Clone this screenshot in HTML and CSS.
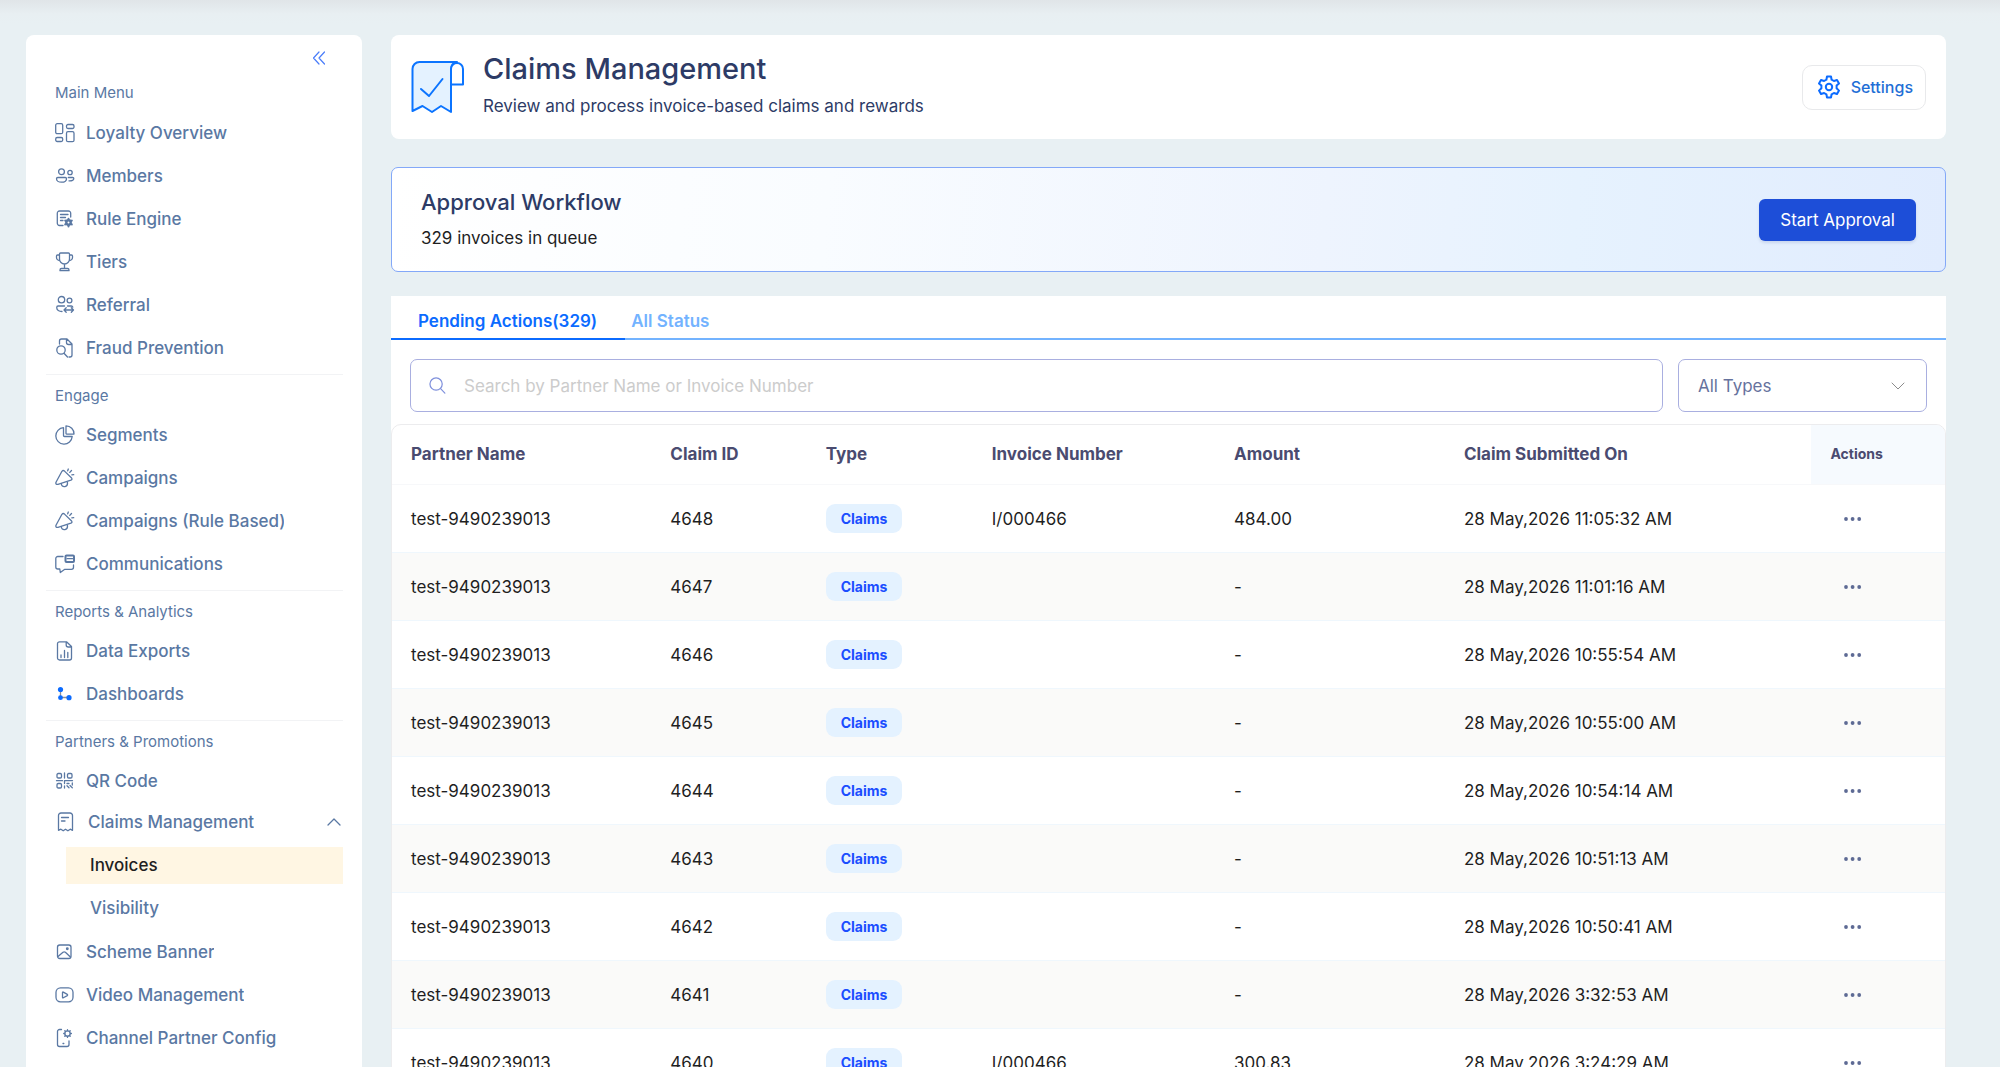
FILE: index.html
```
<!DOCTYPE html>
<html lang="en">
<head>
<meta charset="utf-8">
<meta name="viewport" content="width=device-width, initial-scale=1">
<title>Claims Management</title>
<link rel="stylesheet" href="styles.css">
</head>
<body>
<svg class="sprite" aria-hidden="true">
  <symbol id="i-grid" viewBox="0 0 20 20"><rect x=".7" y=".7" width="7" height="10" rx="1.500"/><rect x="11.500" y="1.500" width="7.500" height="4" rx="1.500"/><rect x=".7" y="14.500" width="7" height="4" rx="1.500"/><rect x="11.500" y="8.700" width="7.500" height="10" rx="1.500"/></symbol>
  <symbol id="i-members" viewBox="0 0 20 20"><circle cx="6.500" cy="5.700" r="2.900"/><circle cx="15" cy="6.500" r="2.200"/><path d="M2.800 11.500h7.500q1.200 0 1.200 1.200c0 2.200-2 3.500-5 3.500s-5-1.300-5-3.500q0-1.200 1.300-1.200zM13.300 11.500h4.500q1 0 1 1c0 1.700-1.900 2.500-4.800 2.300"/></symbol>
  <symbol id="i-rule" viewBox="0 0 20 20"><path d="M8 16.500H4.500a2.200 2.200 0 0 1-2.200-2.200V4.200A2.200 2.200 0 0 1 4.500 2H13.500a2.200 2.200 0 0 1 2.200 2.200V8M5.500 5.500h7.500M5.500 8.500h5M5.500 11.500h2.500"/><circle cx="13.500" cy="13.500" r="2.200" stroke-width="2.400"/><path d="M13.500 9.700v1.200M13.500 16.200v1.200M10.200 11.600l1 .6M15.800 14.800l1 .6M10.200 15.400l1-.6M15.800 12.200l1-.6" stroke-width="2"/></symbol>
  <symbol id="i-cup" viewBox="0 0 20 20"><path d="M4.500 2Q4.500 1 5.500 1H13.500Q14.500 1 14.500 2V7a5 5 0 0 1-10 0zM4.500 3H2.500Q1.500 3 1.500 4V5.500A3 3 0 0 0 4.600 8.500M14.500 3H16.500Q17.500 3 17.500 4V5.500A3 3 0 0 1 14.400 8.500M9.500 12v3.500M5 18.700v-.7q0-1.500 1.500-1.500h6q1.500 0 1.500 1.500v.7z"/></symbol>
  <symbol id="i-referral" viewBox="0 0 20 20"><circle cx="6.500" cy="4.700" r="3.200"/><circle cx="14.500" cy="5.500" r="2.400"/><path d="M7 16.500C4 16.500 1.800 15 1.800 13v-.7Q1.800 11 3 11H9.500M12.500 11h3.800q1.200 0 1.500 1.200M9 15h9.500M11.200 12.800L9 15l2.200 2.200M16.300 12.800L18.500 15l-2.200 2.200"/></symbol>
  <symbol id="i-fraud" viewBox="0 0 20 20"><path d="M4.500 6V3A2 2 0 0 1 6.500 1H12l5 5V17a2 2 0 0 1-2 2h-1M11.500 1.200V4.500A2 2 0 0 0 13.500 6.500H17"/><circle cx="6" cy="12" r="4.200"/><path d="M9 15.200L12.500 19"/></symbol>
  <symbol id="i-pie" viewBox="0 0 20 20"><path d="M11 .8a8 8 0 0 1 8 8.300H11.500a.5.500 0 0 1-.5-.5zM8.500 2.700a8.200 8.200 0 1 0 8.700 8.800H9.500a1 1 0 0 1-1-1z"/></symbol>
  <symbol id="i-horn" viewBox="0 0 20 20"><path d="M6.800 3.500Q7.900 1.700 9.500 3.100L16.600 10Q17.600 11.500 15.900 12.200L3 16.300Q.3 16.700 1 14.300zM6.300 15.500q.2 3.600 3.700 3.100 3.200-.7 2.300-4.900M12.700 2.800l.6-1.800M14.800 4.400l1.700-1.900M16.800 6.800l1.900-.2"/></symbol>
  <symbol id="i-chat" viewBox="0 0 20 20"><path d="M8 2.500H2.800a2 2 0 0 0-2 2V13a2 2 0 0 0 2 2H4.800L5.300 18.500l4.500-3.200H16.500a2 2 0 0 0 2-2V11"/><rect x="10.500" y="1.500" width="8.500" height="6.500" rx="1" stroke-width="2"/><path d="M12 4.700h5.500"/></symbol>
  <symbol id="i-file" viewBox="0 0 20 20"><path d="M4.500.8H11.500L16.500 5.500V17a2 2 0 0 1-2 2H4.500a2 2 0 0 1-2-2V2.800a2 2 0 0 1 2-2zM11.200.8V4a2 2 0 0 0 2 2h3M6 14v2.500M9.500 9.500v7M12.800 11.500v5"/></symbol>
  <symbol id="i-nodes" viewBox="0 0 20 20"><path d="M5.500 5.500v8h8" stroke="#8a8f99"/><g fill="#0b6bff" stroke="none"><circle cx="5.500" cy="5.500" r="2.600"/><circle cx="5.500" cy="13.700" r="2.400"/><circle cx="14" cy="13.700" r="2.600"/></g></symbol>
  <symbol id="i-qr" viewBox="0 0 20 20"><rect x="2" y="2.500" width="4.500" height="4.500" rx="1.200"/><rect x="12.500" y="2.500" width="4.500" height="4.500" rx="1.200"/><rect x="2" y="12.500" width="4.500" height="4.500" rx="1.200"/><path d="M9.500 2v5M1.500 9.700h6M9.500 17v-2M9.500 12.500V9.700h8M12 12.500h2M17.300 12v2M12 14.800l2 2M15 14.500l2.300 2.300"/></symbol>
  <symbol id="i-receipt" viewBox="0 0 20 20"><path d="M2.500 18.300V3.500a2.500 2.500 0 0 1 2.500-2.500H14a2.500 2.500 0 0 1 2.500 2.500V18.300l-2.300-1.100-2.300 1.600-2.400-1.600-2.300 1.600-2.300-1.600zM5.500 5.500h7M5.500 9h3.500"/></symbol>
  <symbol id="i-image" viewBox="0 0 20 20"><rect x="2.500" y="3" width="13.500" height="13.500" rx="2.200"/><circle cx="12.300" cy="6.700" r=".8"/><path d="M3 14.500l5-4.200q1.200-1 2.400 0l5 4.700"/></symbol>
  <symbol id="i-video" viewBox="0 0 20 20"><rect x="1" y="2.800" width="17" height="14" rx="4.500"/><path d="M7.500 7.500v4.800q0 .8.800.5l4-2.200q.7-.6 0-1.200l-4-2.300q-.8-.4-.8.400z"/></symbol>
  <symbol id="i-phone" viewBox="0 0 20 20"><path d="M6.500 1.500H4.500a2 2 0 0 0-2 2V16.500a2 2 0 0 0 2 2H12a2 2 0 0 0 2-2V13M8 15.500h.8"/><circle cx="12.500" cy="5.500" r="2.700"/><path d="M12.500 1.700v1M12.500 8.400v1M8.700 5.500h1M15.400 5.500h1M9.800 2.800l.7.700M14.500 7.500l.7.700M15.200 2.800l-.7.700M10.500 7.500l-.7.700"/></symbol>
  <symbol id="i-more" viewBox="0 0 18 4"><g fill="currentColor" stroke="none"><circle cx="2" cy="2" r="1.900"/><circle cx="8.600" cy="2" r="1.900"/><circle cx="15.200" cy="2" r="1.900"/></g></symbol>
</svg>
<div class="app">
  <aside class="sidebar">
    <button class="collapse" type="button" aria-label="Collapse menu"><svg viewBox="0 0 14 14"><path d="M7 1L1.500 7l5.500 6M12.500 1L7 7l5.500 6"/></svg></button>
    <nav>
      <section class="group">
        <h2 class="group-title">Main Menu</h2>
        <a class="item" href="#"><svg class="icon"><use href="#i-grid"/></svg><span class="label">Loyalty Overview</span></a>
        <a class="item" href="#"><svg class="icon"><use href="#i-members"/></svg><span class="label">Members</span></a>
        <a class="item" href="#"><svg class="icon"><use href="#i-rule"/></svg><span class="label">Rule Engine</span></a>
        <a class="item" href="#"><svg class="icon"><use href="#i-cup"/></svg><span class="label">Tiers</span></a>
        <a class="item" href="#"><svg class="icon"><use href="#i-referral"/></svg><span class="label">Referral</span></a>
        <a class="item" href="#"><svg class="icon"><use href="#i-fraud"/></svg><span class="label">Fraud Prevention</span></a>
      </section>
      <section class="group">
        <h2 class="group-title">Engage</h2>
        <a class="item" href="#"><svg class="icon"><use href="#i-pie"/></svg><span class="label">Segments</span></a>
        <a class="item" href="#"><svg class="icon"><use href="#i-horn"/></svg><span class="label">Campaigns</span></a>
        <a class="item" href="#"><svg class="icon"><use href="#i-horn"/></svg><span class="label">Campaigns (Rule Based)</span></a>
        <a class="item" href="#"><svg class="icon"><use href="#i-chat"/></svg><span class="label">Communications</span></a>
      </section>
      <section class="group">
        <h2 class="group-title">Reports &amp; Analytics</h2>
        <a class="item" href="#"><svg class="icon"><use href="#i-file"/></svg><span class="label">Data Exports</span></a>
        <a class="item" href="#"><svg class="icon"><use href="#i-nodes"/></svg><span class="label">Dashboards</span></a>
      </section>
      <section class="group">
        <h2 class="group-title">Partners &amp; Promotions</h2>
        <a class="item" href="#"><svg class="icon"><use href="#i-qr"/></svg><span class="label">QR Code</span></a>
        <button class="item item-parent" type="button" aria-expanded="true"><svg class="icon"><use href="#i-receipt"/></svg><span class="label">Claims Management</span><svg class="caret" viewBox="0 0 14 8"><path d="M1 7l6-6 6 6"/></svg></button>
        <div class="submenu">
          <a class="subitem active" href="#" aria-current="page">Invoices</a>
          <a class="subitem" href="#">Visibility</a>
        </div>
        <a class="item" href="#"><svg class="icon"><use href="#i-image"/></svg><span class="label">Scheme Banner</span></a>
        <a class="item" href="#"><svg class="icon"><use href="#i-video"/></svg><span class="label">Video Management</span></a>
        <a class="item" href="#"><svg class="icon"><use href="#i-phone"/></svg><span class="label">Channel Partner Config</span></a>
      </section>
    </nav>
  </aside>

  <main class="main">
    <header class="page-head">
      <svg class="page-icon" viewBox="0 0 54 54"><path d="M1.500 51V9a7 7 0 0 1 7-7H46Q40 3 40 10V52l-10-6-9 6-9.500-6z" fill="#e4f2ff"/><path d="M40 24.500H52V9a6 6 0 0 0-12 0z" fill="#fff"/><path d="M10 29l8 7L31.500 19"/></svg>
      <div class="page-text">
        <h1 class="page-title">Claims Management</h1>
        <p class="page-sub">Review and process invoice-based claims and rewards</p>
      </div>
      <button class="settings" type="button"><svg viewBox="0 0 24 24"><circle cx="12" cy="12" r="3.200"/><path d="M10 1.500h4l.6 3.200 2.300 1.300 3.100-1 2 3.400-2.400 2.200v2.700l2.400 2.300-2 3.400-3.100-1-2.300 1.300-.6 3.200h-4l-.6-3.200-2.300-1.300-3.100 1-2-3.400 2.400-2.300v-2.700L2 8.400 4 5l3.100 1 2.300-1.300z"/></svg>Settings</button>
    </header>

    <section class="workflow">
      <div>
        <h2 class="workflow-title">Approval Workflow</h2>
        <p class="workflow-sub">329 invoices in queue</p>
      </div>
      <button class="primary" type="button">Start Approval</button>
    </section>

    <section class="panel">
      <div class="tabs" role="tablist">
        <button class="tab active" type="button" role="tab" aria-selected="true">Pending Actions(329)</button>
        <button class="tab" type="button" role="tab" aria-selected="false">All Status</button>
      </div>
      <div class="filters">
        <div class="search">
          <svg viewBox="0 0 18 18"><circle cx="7.500" cy="7.500" r="6.500"/><path d="M12.300 12.300L16.800 17"/></svg>
          <input type="text" placeholder="Search by Partner Name or Invoice Number" aria-label="Search by Partner Name or Invoice Number">
        </div>
        <div class="select">
          <select aria-label="Claim type"><option>All Types</option><option>Claims</option></select>
          <svg viewBox="0 0 14 8"><path d="M1 1l6 6 6-6"/></svg>
        </div>
      </div>
      <div class="table-wrap">
        <table>
          <colgroup><col class="c-name"><col class="c-id"><col class="c-type"><col class="c-invoice"><col class="c-amount"><col class="c-date"><col class="c-actions"></colgroup>
          <thead>
            <tr><th scope="col">Partner Name</th><th scope="col">Claim ID</th><th scope="col">Type</th><th scope="col">Invoice Number</th><th scope="col">Amount</th><th scope="col">Claim Submitted On</th><th scope="col" class="th-actions">Actions</th></tr>
          </thead>
          <tbody>
            <tr><td>test-9490239013</td><td>4648</td><td><span class="tag">Claims</span></td><td>I/000466</td><td>484.00</td><td>28 May,2026 11:05:32 AM</td><td><button class="more" type="button" aria-label="Actions for 4648"><svg><use href="#i-more"/></svg></button></td></tr>
            <tr><td>test-9490239013</td><td>4647</td><td><span class="tag">Claims</span></td><td></td><td>-</td><td>28 May,2026 11:01:16 AM</td><td><button class="more" type="button" aria-label="Actions for 4647"><svg><use href="#i-more"/></svg></button></td></tr>
            <tr><td>test-9490239013</td><td>4646</td><td><span class="tag">Claims</span></td><td></td><td>-</td><td>28 May,2026 10:55:54 AM</td><td><button class="more" type="button" aria-label="Actions for 4646"><svg><use href="#i-more"/></svg></button></td></tr>
            <tr><td>test-9490239013</td><td>4645</td><td><span class="tag">Claims</span></td><td></td><td>-</td><td>28 May,2026 10:55:00 AM</td><td><button class="more" type="button" aria-label="Actions for 4645"><svg><use href="#i-more"/></svg></button></td></tr>
            <tr><td>test-9490239013</td><td>4644</td><td><span class="tag">Claims</span></td><td></td><td>-</td><td>28 May,2026 10:54:14 AM</td><td><button class="more" type="button" aria-label="Actions for 4644"><svg><use href="#i-more"/></svg></button></td></tr>
            <tr><td>test-9490239013</td><td>4643</td><td><span class="tag">Claims</span></td><td></td><td>-</td><td>28 May,2026 10:51:13 AM</td><td><button class="more" type="button" aria-label="Actions for 4643"><svg><use href="#i-more"/></svg></button></td></tr>
            <tr><td>test-9490239013</td><td>4642</td><td><span class="tag">Claims</span></td><td></td><td>-</td><td>28 May,2026 10:50:41 AM</td><td><button class="more" type="button" aria-label="Actions for 4642"><svg><use href="#i-more"/></svg></button></td></tr>
            <tr><td>test-9490239013</td><td>4641</td><td><span class="tag">Claims</span></td><td></td><td>-</td><td>28 May,2026 3:32:53 AM</td><td><button class="more" type="button" aria-label="Actions for 4641"><svg><use href="#i-more"/></svg></button></td></tr>
            <tr><td>test-9490239013</td><td>4640</td><td><span class="tag">Claims</span></td><td>I/000466</td><td>300.83</td><td>28 May,2026 3:24:29 AM</td><td><button class="more" type="button" aria-label="Actions for 4640"><svg><use href="#i-more"/></svg></button></td></tr>
          </tbody>
        </table>
      </div>
    </section>
  </main>
</div>
</body>
</html>
```
FILE: styles.css
```
*, *::before, *::after { box-sizing: border-box; }
body {
  margin: 0;
  background: #e8f0f3;
  color: #1f1f1f;
  font-family: Inter, "Open Sans", sans-serif;
  font-size: 17px;
}
h1, h2, p { margin: 0; }
a { color: inherit; text-decoration: none; }
button, input, select { font: inherit; color: inherit; }
button { border: 0; padding: 0; background: none; cursor: pointer; }
svg { display: block; fill: none; stroke: currentColor; stroke-width: 1; stroke-linecap: round; stroke-linejoin: round; }
.sprite { display: none; }

.app {
  display: flex;
  align-items: stretch;
  gap: 29px;
  height: 100vh;
  overflow: hidden;
  padding: 35px 54px 0 26px;
  background: linear-gradient(#e0e5e8, #e8eff2 14px, #e8f0f3 24px);
}

/* Sidebar */
.sidebar {
  flex: 0 0 336px;
  overflow: hidden;
  padding: 14px 19px 0 20px;
  background: #fff;
  border-radius: 8px 8px 0 0;
  color: #5a78a3;
}
.collapse { display: block; margin: 0 17px 0 auto; color: #4a7dfa; }
.collapse svg { width: 14px; height: 18px; stroke-width: 1.2; }
.group { padding-bottom: 5px; }
.group + .group { border-top: 1px solid #f2f3f5; }
.group-title {
  padding: 12px 9px 8px;
  font-size: 15px;
  font-weight: 400;
  line-height: 18px;
}
.group:first-child .group-title { padding-top: 17px; padding-bottom: 9px; }
.item {
  display: flex;
  align-items: center;
  gap: 11px;
  width: 100%;
  height: 43px;
  padding: 0 2px 0 9px;
  font-weight: 500;
  text-align: left;
}
.icon { flex: none; width: 20px; height: 20px; stroke-width: 1.3; }
.label { max-width: 198px; overflow: hidden; white-space: nowrap; line-height: 24px; }
.item-parent { gap: 12px; height: 40px; padding-left: 10px; }
.caret { width: 14px; height: 8px; margin-left: auto; stroke-width: 1.3; }
.submenu { display: grid; gap: 6px; margin-left: 20px; padding: 5px 0 3px; }
.subitem { padding: 0 24px; font-weight: 500; line-height: 37px; }
.subitem.active { background: #fff6e3; color: #1f1f1f; }

/* Main column */
.main { flex: 1; min-width: 0; }
.page-head {
  display: flex;
  align-items: center;
  gap: 18px;
  height: 104px;
  padding: 0 20px;
  background: #fff;
  border-radius: 8px;
  color: #2d3b66;
}
.page-icon { width: 54px; height: 54px; stroke: #0b74ff; stroke-width: 2; }
.page-text { flex: 1; padding-bottom: 2px; }
.page-title { font-size: 29px; font-weight: 500; line-height: 40px; }
.page-sub { line-height: 34px; }
.settings {
  display: flex;
  align-items: center;
  gap: 10px;
  height: 45px;
  padding: 0 12px 0 14px;
  border: 1px solid #e8e9eb;
  border-radius: 10px;
  color: #1f6fd6;
  font-size: 16px;
  font-weight: 500;
}
.settings svg { width: 24px; height: 24px; stroke: #0b6bff; stroke-width: 2; }

.workflow {
  display: flex;
  align-items: center;
  justify-content: space-between;
  height: 105px;
  margin-top: 28px;
  padding: 0 29px;
  border: 1px solid #83a8f8;
  border-radius: 7px;
  background: linear-gradient(95deg, #fff, #f9fcff 28%, #eef4fe 60%, #e6f2fe 76%, #e1ecfe);
}
.workflow-title { color: #2d3b66; font-size: 22px; font-weight: 500; line-height: 36px; }
.workflow-sub { line-height: 36px; }
.primary {
  height: 42px;
  padding: 0 21px;
  border-radius: 6px;
  background: #1d4ed8;
  box-shadow: 0 2px 3px #1d3a8a22;
  color: #fff;
}

.panel { margin-top: 24px; background: #fff; }
.tabs {
  display: flex;
  height: 44px;
  box-shadow: inset 0 -2px #73b3ff;
  font-weight: 600;
}
.tab { padding: 5px 6px 0; color: #73b3ff; }
.tab.active { padding: 5px 28px 0 27px; box-shadow: inset 0 -2px #0b6bff; color: #0b6bff; }

.filters { display: flex; gap: 15px; padding: 19px 19px 12px; }
.search, .select { display: flex; align-items: center; height: 53px; border: 1px solid #a9afe0; border-radius: 7px; }
.search { flex: 1; gap: 18px; padding: 0 18px; }
.search svg { width: 17px; height: 17px; color: #7f90dc; stroke-width: 1.3; }
.search input { flex: 1; min-width: 0; border: 0; outline: 0; padding: 0; background: none; }
.search input::placeholder { color: #ccc; opacity: 1; }
.select { flex: 0 0 249px; padding: 0 21px 0 19px; color: #66729d; }
.select select { flex: 1; appearance: none; border: 0; outline: 0; padding: 0; background: none; }
.select svg { width: 14px; height: 8px; color: #8c8c8c; }

.table-wrap { overflow: hidden; border: 1px solid #ececee; border-radius: 10px 10px 0 0; }
table { width: 100%; border-collapse: separate; border-spacing: 0; table-layout: fixed; }
.c-name { width: 16.7%; }
.c-id { width: 10%; }
.c-type { width: 10.7%; }
.c-invoice { width: 15.6%; }
.c-amount { width: 14.8%; }
.c-date { width: 23.6%; }
.c-actions { width: 8.6%; }
th {
  height: 60px;
  padding: 0 19px 2px;
  border-bottom: 1px solid #f7f8fa;
  color: #4a4b70;
  font-weight: 700;
  text-align: left;
}
.th-actions { background: #f6fafe; font-size: 14px; }
td { height: 68px; padding: 0 19px; border-bottom: 1px solid #eff7fd; white-space: nowrap; }
tbody tr:nth-child(even) { background: #fafaf9; }
.tag {
  display: inline-block;
  padding: 0 15px;
  border-radius: 9px;
  background: #e4f2ff;
  color: #1a4dff;
  font-size: 14px;
  font-weight: 700;
  line-height: 29px;
}
.more { display: block; padding: 4px 14px; color: #5d6a94; }
.more svg { width: 18px; height: 4px; }
```
